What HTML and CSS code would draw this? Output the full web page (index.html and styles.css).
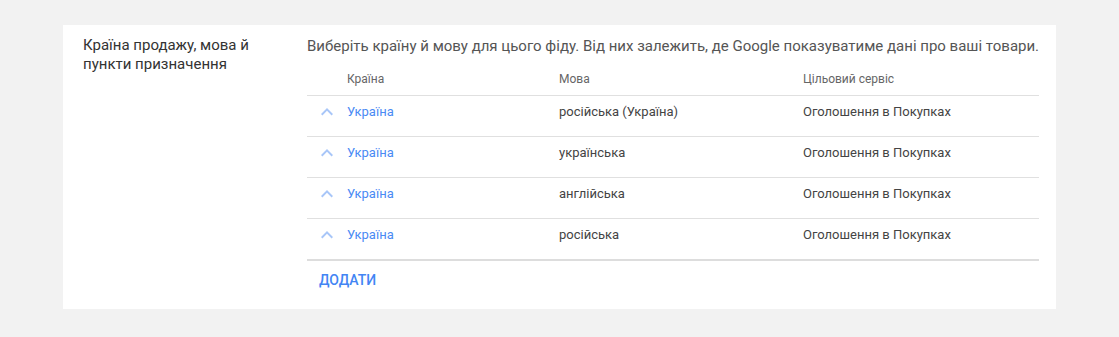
FILE: index.html
```html
<!DOCTYPE html>
<html lang="uk">
<head>
    <meta charset="UTF-8">
    <meta name="viewport" content="width=device-width, initial-scale=1.0">
    <title>Налаштування фіду</title>
    <link rel="stylesheet" href="styles.css">
</head>
<body>
    <div class="card">
        <div class="field-label">Країна продажу, мова й пункти призначення</div>

        <div class="field-body">
            <p class="hint">Виберіть країну й мову для цього фіду. Від них залежить, де Google показуватиме дані про ваші товари.</p>

            <table class="targets">
                <thead>
                    <tr>
                        <th class="col-icon"></th>
                        <th class="col-country">Країна</th>
                        <th class="col-lang">Мова</th>
                        <th>Цільовий сервіс</th>
                    </tr>
                </thead>
                <tbody>
                    <tr>
                        <td class="col-icon"><svg class="chevron" viewBox="0 0 24 24"><path d="M12 8l-6 6 1.41 1.41L12 10.83l4.59 4.58L18 14z"/></svg></td>
                        <td><a href="#" class="country">Україна</a></td>
                        <td>російська (Україна)</td>
                        <td>Оголошення в Покупках</td>
                    </tr>
                    <tr>
                        <td class="col-icon"><svg class="chevron" viewBox="0 0 24 24"><path d="M12 8l-6 6 1.41 1.41L12 10.83l4.59 4.58L18 14z"/></svg></td>
                        <td><a href="#" class="country">Україна</a></td>
                        <td>українська</td>
                        <td>Оголошення в Покупках</td>
                    </tr>
                    <tr>
                        <td class="col-icon"><svg class="chevron" viewBox="0 0 24 24"><path d="M12 8l-6 6 1.41 1.41L12 10.83l4.59 4.58L18 14z"/></svg></td>
                        <td><a href="#" class="country">Україна</a></td>
                        <td>англійська</td>
                        <td>Оголошення в Покупках</td>
                    </tr>
                    <tr>
                        <td class="col-icon"><svg class="chevron" viewBox="0 0 24 24"><path d="M12 8l-6 6 1.41 1.41L12 10.83l4.59 4.58L18 14z"/></svg></td>
                        <td><a href="#" class="country">Україна</a></td>
                        <td>російська</td>
                        <td>Оголошення в Покупках</td>
                    </tr>
                </tbody>
            </table>

            <button class="add-btn">Додати</button>
        </div>
    </div>
</body>
</html>
```

FILE: styles.css
```css
body {
    margin: 0;
    padding: 25px 0 0 63px;
    background-color: #f2f2f2;
    font-family: Roboto, "Noto Sans", Arial, sans-serif;
    color: #333;
}
.card {
    display: flex;
    width: 956px;
    height: 273px;
    padding: 11px 17px 0 20px;
    background: white;
}
.field-label {
    width: 200px;
    margin-right: 24px;
    flex-shrink: 0;
    font-size: 15px;
    line-height: 19px;
    color: #333;
}
.field-body {
    flex: 1;
}
.hint {
    margin: 0;
    font-size: 15px;
    line-height: 20px;
    color: #555;
    white-space: nowrap;
}
.targets {
    width: 100%;
    border-collapse: collapse;
    font-size: 13px;
}
.targets th {
    text-align: left;
    font-weight: normal;
    font-size: 12px;
    line-height: 16px;
    color: #666;
    padding: 15px 0 8px;
    border-bottom: 1px solid #e0e0e0;
}
.targets td {
    height: 41px;
    padding: 0;
    line-height: 20px;
    vertical-align: top;
    padding-top: 6px;
    box-sizing: border-box;
    color: #444;
    border-bottom: 1px solid #e0e0e0;
}
.targets tbody tr:last-child td {
    border-bottom: 2px solid #ddd;
}
.col-icon {
    width: 40px;
    text-align: center;
}
.col-country {
    width: 212px;
}
.col-lang {
    width: 244px;
}
.chevron {
    width: 24px;
    height: 24px;
    fill: #a8c6f8;
    display: block;
    margin: -2px auto 0;
}
.country {
    color: #4a8af4;
    text-decoration: none;
}
.add-btn {
    margin-top: 9px;
    padding: 0 12px;
    border: none;
    background: none;
    font-family: inherit;
    font-size: 14px;
    font-weight: 500;
    line-height: 20px;
    text-transform: uppercase;
    color: #4285f4;
    cursor: pointer;
}
```
